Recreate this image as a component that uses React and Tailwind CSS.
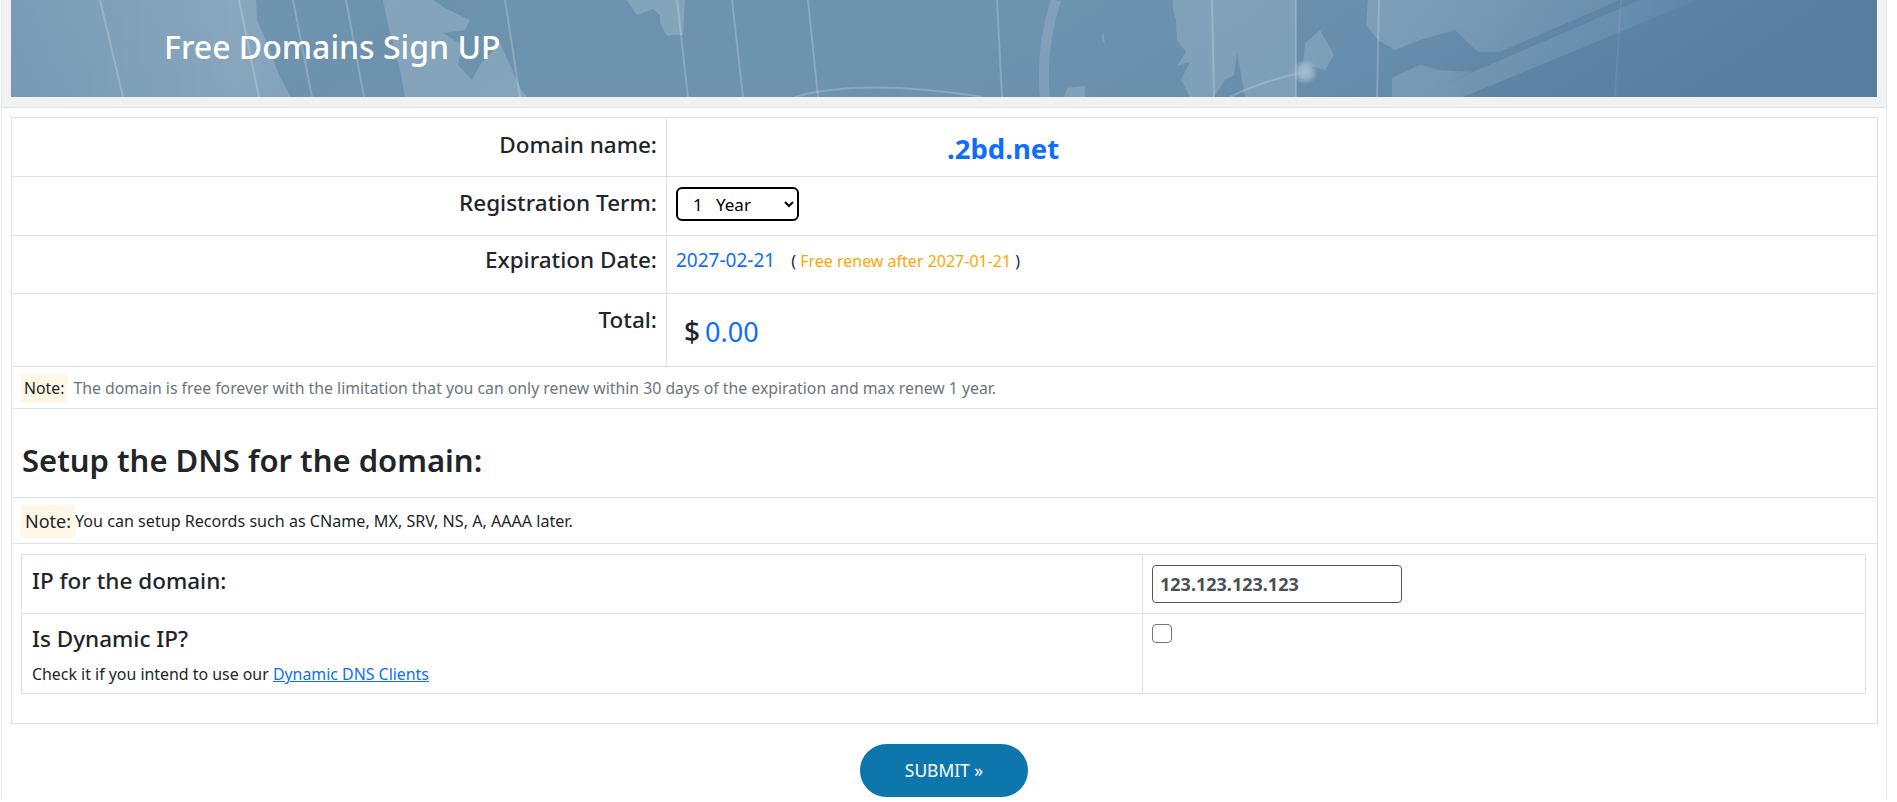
const font = { fontFamily: '"Noto Sans", sans-serif' };

const BannerArt = () => (
  <svg className="absolute inset-0 h-full w-full" viewBox="11 0 1866 97" preserveAspectRatio="none">
    <defs>
      <linearGradient id="bannerBg" x1="0" y1="0" x2="1" y2="0.08">
        <stop offset="0" stopColor="#7699b4" />
        <stop offset="0.22" stopColor="#6c92ae" />
        <stop offset="0.55" stopColor="#6d93af" />
        <stop offset="0.78" stopColor="#668dab" />
        <stop offset="0.88" stopColor="#5b84a5" />
        <stop offset="1" stopColor="#567f9f" />
      </linearGradient>
      <linearGradient id="landFade" gradientUnits="userSpaceOnUse" x1="11" y1="0" x2="1877" y2="0">
        <stop offset="0" stopColor="#ffffff" stopOpacity="0.03" />
        <stop offset="0.12" stopColor="#ffffff" stopOpacity="0.17" />
        <stop offset="0.72" stopColor="#ffffff" stopOpacity="0.15" />
        <stop offset="0.86" stopColor="#ffffff" stopOpacity="0.08" />
        <stop offset="0.92" stopColor="#ffffff" stopOpacity="0" />
      </linearGradient>
      <radialGradient id="glow">
        <stop offset="0" stopColor="#a9c0d2" />
        <stop offset="0.5" stopColor="#a9c0d2" stopOpacity="0.7" />
        <stop offset="1" stopColor="#a9c0d2" stopOpacity="0" />
      </radialGradient>
    </defs>
    <rect x="11" y="0" width="1866" height="97" fill="url(#bannerBg)" />
    <path
      fill="url(#landFade)"
      d="M11 0H256L257 20L268 45L279 75L291 97H11Z
         M383 0H433L445 8L470 20L465 30L443 33L462 45L458 65L472 80L480 65L500 43L510 65L520 88L527 97H405L400 70L388 25Z
         M627 0L637 15L653 9L660 15L660 22L665 33L668 36L673 35L683 35L685 0Z
         M1173 0H1296V97H1245L1237 52L1234 75L1225 80L1214 97H1190L1181 80L1190 62L1177 66L1186 52L1177 40L1176 20L1173 10Z
         M1305 43L1320 30L1334 55L1325 70L1303 64Z
         M1368 0H1620L1500 52H1478L1455 30L1420 40L1395 50L1378 40L1366 25Z
         M1392 78L1420 65L1440 70L1472 72L1415 97H1392Z
         M1415 97L1640 0H1697L1463 97Z
         M1067 88L1085 86V97H1064Z
         M1103 30L1105 45L1102 38Z"
    />
    <g fill="none" stroke="#ffffff" strokeOpacity="0.2" strokeWidth="2">
      <path d="M100 0L123 97" />
      <path d="M239 0L259 97" />
      <path d="M293 0L312 97" />
      <path d="M346 0L364 97" />
      <path d="M505 0L520 97" />
      <path d="M677 0L688 97" />
      <path d="M732 0L743 97" />
      <path d="M808 0L818 97" />
      <path d="M997 0L1002 97" />
      <path d="M1212 0L1214 97" />
      <path d="M1296 0V97" />
      <path d="M1379 0L1377 97" />
      <path d="M795 97Q860 78 983 97" />
      <path d="M1230 97Q1260 82 1300 73" />
      <path d="M1621 0L1615 97" strokeOpacity="0.07" />
      <path d="M1056 0Q1040 50 1045 97" strokeOpacity="0.14" strokeWidth="10" />
    </g>
    <circle cx="1305" cy="72" r="13" fill="url(#glow)" />
  </svg>
);

const Row = ({ label, labelTop = "pt-[8px]", className, children }) => (
  <div className={`flex border-b border-[#dee2e6] ${className}`}>
    <div className={`w-[655px] shrink-0 border-r border-[#dee2e6] pr-[9px] text-right text-[22.5px] leading-[36px] font-medium text-[#212529] ${labelTop}`}>
      {label}
    </div>
    <div className="flex-1 pl-[8px]">{children}</div>
  </div>
);

const Note = ({ className, children }) => (
  <span className={`inline-block bg-[#fff8e6] text-[#212529] ${className}`}>{children}</span>
);

export default function App() {
  return (
    <div className="h-[802px] overflow-hidden bg-white" style={font}>
      <div className="ml-px w-[1886px] border-r border-l border-[#e3e6ea] bg-[#fafafa]">
        {/* Banner */}
        <div className="h-[108px] border-b border-[#dee2e6] bg-[#f1f1f1] pr-[10px] pl-[9px]">
          <div className="relative h-[97px] w-[1866px] overflow-hidden">
            <BannerArt />
            <h1 className="relative pt-[24px] pl-[153px] text-[32px] leading-[46px] font-medium text-white">
              Free Domains Sign UP
            </h1>
          </div>
        </div>

        <div className="h-[691px] bg-white pt-[9px] pl-[9px]">
          {/* Form table */}
          <div className="w-[1867px] border border-[#dee2e6]">
            <Row label="Domain name:" labelTop="pt-[9px]" className="h-[59px]">
              <div className="pt-[12px] pl-[272px] text-[27.5px] leading-[38px] font-bold text-[#0d6efd]">.2bd.net</div>
            </Row>
            <Row label="Registration Term:" className="h-[59px]">
              <select className="mt-[10px] ml-px h-[34px] w-[123px] rounded-[6px] border-2 border-black pl-[11px] text-[17px] text-black">
                <option>1 &nbsp; Year</option>
              </select>
            </Row>
            <Row label="Expiration Date:" labelTop="pt-[6px]" className="h-[58px]">
              <div className="pt-[12px] pl-px text-[19px] leading-[24px]">
                <span className="text-[#0d6efd]">2027-02-21</span>
                <span className="ml-[16px] text-[16px] text-[#212529]">
                  ( <span className="text-[#ffa500]">Free renew after 2027-01-21</span> )
                </span>
              </div>
            </Row>
            <Row label="Total:" className="h-[73px]">
              <div className="flex items-baseline pt-[15px] pl-[9px] leading-[44px]">
                <span className="text-[28px] font-medium text-[#212529]">$</span>
                <span className="ml-[5px] text-[27px] text-[#0d6efd]">0.00</span>
              </div>
            </Row>

            <div className="flex h-[42px] items-center border-b border-[#dee2e6] pt-[2px] pl-[9px] text-[15.8px] text-[#6c757d]">
              <Note className="mr-[6px] px-[3px] leading-[29px]">Note:</Note>
              The domain is free forever with the limitation that you can only renew within 30 days of the expiration and max renew 1 year.
            </div>

            <div className="flex h-[89px] items-center border-b border-[#dee2e6] pt-[14px] pl-[10px]">
              <h2 className="text-[31px] font-semibold text-[#212529]">Setup the DNS for the domain:</h2>
            </div>

            <div className="flex h-[46px] items-center border-b border-[#dee2e6] pt-[2px] pl-[9px] text-[16.1px] text-[#212529]">
              <Note className="px-[4px] text-[18px] leading-[33px]">Note:</Note>
              You can setup Records such as CName, MX, SRV, NS, A, AAAA later.
            </div>

            {/* DNS table */}
            <div className="h-[179px] pt-[10px] pl-[9px]">
              <div className="w-[1845px] border border-[#dee2e6]">
                <div className="flex h-[59px] border-b border-[#dee2e6]">
                  <div className="w-[1121px] shrink-0 border-r border-[#dee2e6] pt-[11px] pl-[10px] text-[22.5px] leading-[30px] font-medium text-[#212529]">
                    IP for the domain:
                  </div>
                  <div className="pt-[10px] pl-[9px]">
                    <input
                      className="h-[38px] w-[250px] rounded-[4px] border border-[#555] px-[7px] text-[18px] font-bold text-[#495057]"
                      defaultValue="123.123.123.123"
                    />
                  </div>
                </div>
                <div className="flex h-[79px]">
                  <div className="w-[1121px] shrink-0 border-r border-[#dee2e6] pt-[10px] pl-[10px] text-[#212529]">
                    <div className="text-[22.5px] leading-[30px] font-medium">Is Dynamic IP?</div>
                    <div className="mt-[8px] text-[15.9px] leading-[24px]">
                      Check it if you intend to use our{" "}
                      <a href="#" className="text-[#0d6efd] underline">Dynamic DNS Clients</a>
                    </div>
                  </div>
                  <div className="pt-[10px] pl-[9px]">
                    <input type="checkbox" className="block h-[19px] w-[20px] appearance-none rounded-[4px] border border-[#767676] bg-white" />
                  </div>
                </div>
              </div>
            </div>
          </div>

          {/* Submit */}
          <div className="flex justify-center pt-[20px] pr-[9px]">
            <button className="h-[53px] w-[168px] rounded-[27px] bg-[#0d76ad] text-[17.4px] text-white">SUBMIT »</button>
          </div>
        </div>
      </div>
    </div>
  );
}
